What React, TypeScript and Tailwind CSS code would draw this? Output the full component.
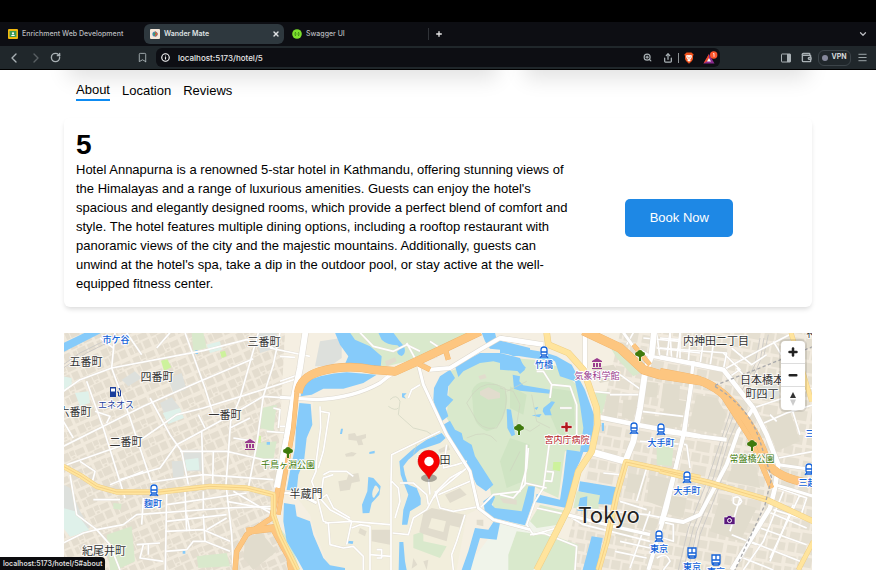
import React from "react";
import {
  Bookmark,
  ChevronDown,
  ChevronLeft,
  ChevronRight,
  Info,
  Menu,
  Plus,
  RotateCw,
  Share,
  Wallet,
  X,
  ZoomIn,
} from "lucide-react";

/* ------------------------------------------------------------------ */
/* Map data: each shape is drawn in the local space of one map tile.   */
/* ------------------------------------------------------------------ */

type Tile = "A" | "B" | "C" | "D";
type Shape = [Tile, string, number?];

const tileX: Record<Tile, number> = { A: 60, B: 280, C: 500, D: 660 };

const palace: Shape[] = [
  ["B", "M100 215L195 215L330 150L410 110L430 160L480 290L580 450L600 540L560 560L530 726L150 726L100 600L90 560L45 500L60 400L95 290Z"],
];

const parks: Shape[] = [
  ["B", "M200 14L600 14L400 95L300 120Z"],
  ["B", "M510 130L640 85L760 95L830 115L900 180L925 300L900 370L855 370L835 510L760 475L740 560L640 540L630 480L500 270Z"],
  ["A", "M605 240L650 230L640 310L600 300Z"],
  ["A", "M590 345L650 340L640 395L580 390Z"],
  ["A", "M395 14L430 14L440 60L400 70Z"],
  ["A", "M140 620L215 595L225 700L170 726L150 726Z"],
  ["A", "M410 685L500 675L510 715L415 720Z"],
  ["A", "M160 525L185 527L182 545L160 542Z"],
  ["B", "M400 620L430 610L430 640L500 655L480 690L400 660Z"],
  ["B", "M0 600L30 640L60 726L40 726L0 650Z"],
  ["C", "M50 610L160 625L100 726L25 726L25 680Z"],
  ["C", "M165 625L235 650L225 726L120 726Z"],
  ["C", "M120 530L200 550L175 590L110 600L90 580Z"],
  ["C", "M285 190L325 190L305 260L290 240Z"],
  ["C", "M470 350L520 360L515 415L470 410Z"],
  ["C", "M320 40L430 130L400 145L350 90Z"],
  ["C", "M230 490L300 500L295 545L220 540Z"],
];

const parksDeep: Shape[] = [
  ["B", "M575 190Q590 150 640 165Q690 180 680 230Q670 300 620 310Q580 290 580 250Z"],
  ["B", "M690 175L740 200L730 260L690 240Z"],
  ["C", "M30 330L90 350L70 460L20 480L0 400Z"],
  ["C", "M150 180L220 190L225 290L180 330L150 260Z"],
];

const limes: Shape[] = [
  ["A", "M303 98L322 94L334 118L312 128Z"],
  ["A", "M480 72L495 68L500 84L485 90Z"],
  ["A", "M592 325L603 323L602 345L590 344Z"],
  ["C", "M160 402L183 402L180 430L158 425Z"],
];

const mints: Shape[] = [
  ["A", "M10 145L35 150L35 175L10 190Z"],
  ["A", "M45 195L85 190L90 225L60 235Z"],
  ["A", "M440 50L480 40L485 65L450 75Z"],
  ["A", "M308 255L360 240L372 270L325 288Z"],
  ["A", "M375 395L415 390L418 425L380 428Z"],
  ["A", "M10 540L45 550L90 610L30 626L10 600Z"],
];

const civic: Shape[] = [
  ["A", "M185 155L225 130L245 150L205 175Z"],
  ["A", "M300 225L335 208L360 240L312 255Z"],
  ["A", "M325 150L365 135L380 185L340 195Z"],
  ["A", "M335 400L370 398L372 450L340 452Z"],
  ["A", "M370 365L430 365L428 430L378 430L372 395Z"],
  ["A", "M10 470L30 480L60 550L90 600L50 610L10 560Z"],
  ["A", "M590 14L650 14L650 60L600 75Z"],
  ["B", "M120 40L185 30L185 90L150 115L105 115Z"],
  ["D", "M280 180L350 170L360 205L300 210Z"],
];

const waters: Shape[] = [
  ["A", "M10 45L75 14L125 14L10 72Z"],
  ["A", "M406 66L414 66L414 78L406 78ZM620 342L630 342L630 350L620 350ZM368 665L376 665L376 677L368 677Z"],
  ["B", "M58 225L92 228L97 290L80 330L72 400L55 440L50 488L20 486L30 430L45 360L48 300Z"],
  ["B", "M12 525L45 530L50 565L90 580L100 620L130 690L150 712L195 720L195 726L70 726L50 690L20 640L10 580Z"],
  ["B", "M165 14L210 14L225 35L270 55L305 85L302 118L250 112L195 108L205 85L180 50Z"],
  ["B", "M70 165Q120 138 200 133L290 140L250 165L190 182L130 182L95 200L62 205Z"],
  ["B", "M295 14L340 14Q355 35 372 55Q380 75 365 84Q350 78 352 70Q365 62 352 52Q320 50 305 35Z"],
  ["B", "M265 447L280 450L302 475L298 500L275 525L268 555L248 556L246 530L262 490ZM278 488Q274 508 282 510L298 486Q290 468 284 474Z"],
  ["B", "M485 315L497 330L480 345L420 365L385 395L370 415L375 440L385 470L410 480L422 510L422 530L390 550L382 590L366 590L370 545L385 500L370 462L362 440L358 400L400 362L440 335Z"],
  ["B", "M358 642L370 642L375 700L380 726L356 726Z"],
  ["B", "M510 125L525 150L505 175L502 202L520 215L497 240L505 265L485 280L470 255L460 215L462 180L480 145Z"],
  ["B", "M490 290L510 278L525 305L545 315L550 335L575 350L585 385L640 470L618 490L590 470L570 430L535 370Z"],
  ["B", "M525 115L600 75L660 75L720 90L735 125L720 138L700 115L640 100L600 105L550 130L535 147Z"],
  ["B", "M605 14L645 14L650 35L750 60L750 80L700 85L660 65L630 62L615 40Z"],
  ["B", "M183 302L189 302L186 318L180 318ZM268 372L284 368L284 376L268 378ZM366 196L380 196L372 204L378 212L366 208ZM203 638L220 640L218 648L203 646Z"],
  ["B", "M610 520L640 498L645 508L635 530L645 540L725 550L745 475L765 475L760 520L735 592L640 570L615 555Z"],
  ["B", "M585 600L625 605L640 582L660 585L650 635L600 630L585 680L572 726L545 726L565 670Z"],
  ["C", "M38 140L60 145L58 160L70 172L150 185L150 197L60 188L42 182Z"],
  ["C", "M20 243L33 245L45 320L35 325L22 300Z"],
  ["C", "M0 50L130 72L170 85L215 110L255 185L282 260L280 330L275 372L240 372L250 300L240 230L225 160L180 145L165 100L80 88L0 75Z"],
  ["C", "M0 90L60 98L78 120L60 130L0 125Z"],
  ["C", "M200 365L250 372L240 400L225 430L215 490L200 540L105 522L110 498L180 515L190 450Z"],
  ["C", "M240 460L350 478L335 530L295 528L300 502L235 490Z"],
  ["C", "M275 625L308 630L290 726L248 726Z"],
  ["C", "M130 240L155 220L165 222L150 245L155 262L135 262L128 250ZM102 240L115 236L110 246ZM95 262L125 258L118 268ZM240 510L262 505L260 550L232 548ZM305 285L312 285L312 308L306 310Z"],
  ["D", "M283 193L289 195L290 208L283 208Z"],
];

const buildings: Shape[] = [
  ["B", "M205 318L225 315L230 325L258 318L258 330L245 335L250 350L235 352L230 338L205 335Z"],
  ["B", "M175 460L200 455L205 440L235 435L240 460L215 465L210 485L180 490Z"],
  ["B", "M195 378L215 372L230 376L220 385L198 386Z"],
  ["B", "M430 555L455 540L555 560L545 600L510 592L500 640L430 618L418 612ZM455 570L445 600L490 612L498 580Z"],
  ["B", "M495 500L540 480L560 500L510 525Z"],
  ["B", "M240 600L260 610L255 625L235 615ZM275 605L330 605L330 650L275 640Z"],
  ["B", "M600 190L625 178L660 195L660 210L625 215L600 200Z"],
  ["B", "M595 145L615 138L620 150L600 155Z"],
  ["B", "M315 100L345 88L350 100L320 115Z"],
  ["B", "M475 365L505 350L510 365L480 375ZM660 510L710 515L710 530L670 525Z"],
  ["B", "M400 690L412 710L395 722ZM430 700L445 695L440 726ZM590 575L610 575L610 595L590 590Z"],
  ["A", "M555 640L600 610L650 670L580 726L550 690Z"],
  ["C", "M320 200L360 195L350 280L310 270Z"],
  ["C", "M370 215L415 215L400 275L365 270Z"],
  ["C", "M430 160L475 165L470 210L430 205Z"],
  ["C", "M490 165L540 172L535 250L480 240Z"],
  ["C", "M430 260L520 270L520 300L430 290Z"],
  ["C", "M385 435L440 445L425 500L375 490Z"],
  ["C", "M450 440L525 455L510 545L440 520Z"],
  ["C", "M355 580L405 590L395 635L345 625Z"],
  ["C", "M420 560L475 575L465 610L410 600Z"],
  ["C", "M275 120L340 110L370 150L300 165Z"],
  ["D", "M20 210L80 220L60 300L0 290Z"],
  ["D", "M110 200L170 210L200 260L180 320L85 300Z"],
  ["D", "M310 270L390 250L420 340L350 370Z"],
  ["D", "M230 380L290 420L300 480L200 460Z"],
  ["D", "M20 500L80 510L70 570L10 555Z"],
  ["D", "M180 510L290 540L240 640L150 610Z"],
];

const smallRoads: Shape[] = [
  ["A", "M10 190L60 155L155 120L430 68L560 35L640 60"],
  ["A", "M10 355L160 280L250 235L420 160L580 92"],
  ["A", "M20 410L250 330L350 260L430 240L560 200L750 140"],
  ["A", "M80 160L130 300L195 510"],
  ["A", "M165 14L155 120L210 270L275 465"],
  ["A", "M200 14L245 80M330 14L290 60M120 30L160 60"],
  ["A", "M270 210L330 320L365 370L385 470"],
  ["A", "M375 14L435 180L460 260M415 260L435 300"],
  ["A", "M595 14L540 210L512 280L498 470L515 620L520 726"],
  ["A", "M180 455L300 420L350 350L470 285L550 240L610 205L750 215"],
  ["A", "M610 205L590 350L565 480"],
  ["A", "M360 370L500 370L610 395L660 395"],
  ["A", "M425 310L430 470M460 370L458 470"],
  ["A", "M275 462L430 440L640 455"],
  ["A", "M30 440L50 560L110 605L190 590L230 560L500 540L640 535"],
  ["A", "M110 605L150 650L180 726M10 645L70 615L110 605"],
  ["A", "M250 510L245 590M320 495L316 726M375 490L380 610M430 490L430 545M320 530L560 495M500 520L640 545"],
  ["A", "M320 580L500 560M316 610L430 605L510 640M380 560L390 610M430 560L435 640L510 670M440 605L500 570M316 670L380 665L400 640L435 640"],
  ["A", "M230 650L300 645M250 650L240 690L310 700M265 650L265 680"],
  ["A", "M520 330L585 340M510 300L570 270M520 490L640 560M540 640L630 580"],
  ["A", "M620 310L680 315L670 370M640 240L660 245L655 300M630 60L750 85M660 14L640 110L610 205"],
  ["A", "M105 250L150 265L140 285M10 280L40 330M60 400L105 430L95 470M150 470L250 430M100 515L180 515"],
  ["B", "M120 235L122 300L110 390L108 430L95 460L110 500L130 580L145 585L150 650L190 660L220 655L250 685L250 726"],
  ["B", "M122 250L148 255L130 370L115 420"],
  ["B", "M110 500L150 545L215 580L330 590M135 585L215 580L200 650M215 600L240 590L270 595L270 726"],
  ["B", "M130 440L150 430L200 430L220 445M125 490L130 450L160 440M120 515L140 500L160 540L210 570"],
  ["B", "M480 310L335 380L333 460L333 726M335 460L355 480L360 520L345 570"],
  ["B", "M338 615L385 620L400 570L440 545L470 490L510 450L545 430"],
  ["B", "M360 465L400 465L440 500L445 530M445 450L450 500M465 490L480 540L520 550L600 535"],
  ["B", "M500 350L490 420L530 410L560 400M475 500L570 460M460 510L475 490L560 420"],
  ["B", "M555 560L530 640L515 680L520 726M290 665L305 665L305 690L290 690M270 680L333 685"],
  ["B", "M385 210L395 185L420 170M240 14L280 55L340 70L380 50L420 70"],
  ["B", "M380 45L410 100M440 95L470 85L480 60L450 40"],
  ["B", "M0 85L45 88M0 160L55 140M0 295L25 295"],
  ["B", "M600 540L640 500L720 490L740 420L745 360"],
  ["C", "M110 130L130 130L155 170L150 210M155 170L210 175L230 230L230 330M180 240L215 240"],
  ["C", "M150 330L130 480L105 520M75 465L140 480M80 350L75 470L40 510L0 500M140 430L160 432L155 460L135 458"],
  ["C", "M105 520L80 590L100 620L170 600M200 560L250 590L450 640M110 540L200 560M230 540L440 560L540 580"],
  ["C", "M90 620L130 615L230 655L225 726"],
  ["C", "M360 140L430 190M330 200L420 200M280 190L330 195M310 435L360 440M360 520L440 545M410 520L440 420M425 250L550 265M420 340L560 350M360 640L450 660M345 670L440 690M390 720L450 550"],
  ["C", "M400 14L380 50M430 30L540 40M470 14L480 90M510 14L515 95M540 14L540 100M470 60L600 75"],
  ["C", "M480 580L520 590L520 640L490 630M560 350L570 420M470 690Q500 670 510 700L490 726"],
  ["D", "M0 60L200 75L190 125M30 14L20 90M60 14L50 95M90 40L85 100M130 40L120 110M160 50L150 115M0 30L60 35"],
  ["D", "M190 75L240 125L210 145M215 60L275 110L320 80M190 125L330 50L400 14M230 120L260 150M340 40L370 90"],
  ["D", "M280 240L370 210L460 180M370 160L420 320M300 290L380 255L460 230M355 390L460 370M330 260L350 280"],
  ["D", "M355 480L440 510L420 570L340 545M370 490L310 640L250 726M420 500L330 690M300 600L440 650M320 550L440 600M270 640L420 700M250 690L340 726M290 610L240 700"],
  ["D", "M400 530L330 700M215 620L290 650M240 510L210 610M220 510Q240 500 245 520Q235 540 220 525Z"],
];

const bigRoads: Shape[] = [
  ["B", "M76 14L60 120L40 215L20 330L-10 480", 18],
  ["B", "M0 208L110 215Q220 210 300 165Q350 120 420 105", 10],
  ["B", "M415 110L430 170L500 320L570 430L595 540L640 575L750 605", 9],
  ["B", "M410 100L450 125L510 120L600 65L660 30L750 45", 12],
  ["B", "M-20 495L20 495L60 500L110 525", 8],
  ["C", "M0 30L130 50", 14],
  ["C", "M462 14L455 80L435 135L420 240L400 340L375 402", 18],
  ["C", "M300 268L410 290L600 325", 14],
  ["C", "M275 372L375 400", 20],
  ["C", "M255 14L255 120", 12],
  ["C", "M370 14L400 55L450 85L600 108", 9],
  ["C", "M575 165L550 320L500 540L445 726", 12],
  ["C", "M200 560L360 600L450 620", 10],
  ["D", "M0 88L190 125L280 240L320 320L355 410L345 480L330 540L215 726", 14],
  ["D", "M100 100L75 310L0 590", 10],
  ["D", "M280 240L235 310L200 410L120 560L70 582L0 570", 12],
  ["D", "M0 310L200 335", 12],
  ["D", "M355 410L460 425M345 470L460 505", 9],
];

const motorways: Shape[] = [
  ["B", "M55 195Q60 148 120 130Q200 108 280 125L345 130L400 105L520 48L600 10", 24],
  ["B", "M50 195L40 300L10 470L-5 560", 12],
  ["B", "M400 100L450 125M505 95L495 60", 14],
  ["A", "M525 726L530 670L560 620L635 570L655 480", 14],
  ["A", "M560 610L640 600L690 690L695 726", 20],
  ["C", "M250 8L360 60L430 125L480 140L600 158", 26],
  ["C", "M400 50L450 110", 12],
  ["D", "M0 133L90 150Q170 165 230 240Q290 310 320 400Q345 450 460 468", 24],
  ["D", "M180 190L270 330L335 480", 14],
];

const trunks: Shape[] = [
  ["A", "M10 415L60 442L110 475L170 492L300 492L450 475L560 480L640 500L640 560L660 620L712 726", 13],
  ["C", "M140 14L145 50L205 75L250 125L290 240L292 290L275 370L235 430L205 540L170 610L110 726", 17],
  ["C", "M600 450L378 402L350 500L320 640L295 726", 15],
  ["D", "M0 428L150 465L320 515L460 580", 15],
  ["D", "M393 14L410 70L455 220M460 640L415 726", 12],
];

const trunkCentres: Shape[] = [
  ["A", "M10 415L60 442L110 475L170 492L300 492L450 475L560 480L640 500L640 560L660 620L712 726"],
  ["C", "M600 450L378 402L350 500L320 640L295 726"],
  ["D", "M0 428L150 465L320 515"],
];

const rails: Shape[] = [
  ["D", "M225 250L195 330L160 450L100 600L70 726M240 260L205 340L170 460L110 610L85 726M215 240L185 330L145 450L85 600L55 726M250 265L215 350L180 470L120 620L100 726"],
  ["D", "M300 30L285 110L240 200M312 30L300 100L260 190M325 20L310 90"],
  ["A", "M10 110L60 75L160 25M10 120L80 75L170 30"],
];

const dashed: Shape[] = [
  ["D", "M165 172L300 120L460 55M165 175Q270 240 300 340L335 450L315 530L225 726"],
];

const footpaths: Shape[] = [
  ["B", "M330 215Q350 195 360 220L355 260L400 300L440 310L470 330M325 235Q345 250 355 240M400 380L410 350"],
  ["B", "M580 195Q620 150 675 180Q690 240 650 300Q600 310 580 260L560 225ZM560 330Q620 300 650 340M680 190L740 160"],
  ["C", "M0 180L40 190L60 230L50 290L90 310L120 290M60 370L30 430M95 200L110 280L150 300"],
];

function Layer({
  items,
  paint,
  className,
  extra = 0,
  base = 1,
  dash,
}: {
  items: Shape[];
  paint: "fill" | "line";
  className: string;
  extra?: number;
  base?: number;
  dash?: string;
}) {
  return (
    <g className={className} strokeLinejoin="round" strokeDasharray={dash}>
      {items.map(([tile, d, w], i) => (
        <path
          key={i}
          d={d}
          fillRule="evenodd"
          transform={`translate(${tileX[tile]} 328) scale(0.33333)`}
          fill={paint === "line" ? "none" : undefined}
          strokeWidth={paint === "line" ? (w ?? base) + extra : undefined}
        />
      ))}
    </g>
  );
}

/* ------------------------------ Labels ----------------------------- */

type Label = [string, number, number];

const districts: Label[] = [
  ["五番町", 86, 366],
  ["四番町", 157, 381],
  ["三番町", 264, 346],
  ["六番町", 75, 416],
  ["一番町", 225, 419],
  ["二番町", 126, 446],
  ["半蔵門", 306, 498],
  ["紀尾井町", 104, 555],
  ["千代田", 434, 464],
  ["内神田二丁目", 716, 345],
  ["日本橋本", 762, 384],
  ["町四丁", 762, 398],
  ["神", 812, 337],
];

const stations: Label[] = [
  ["市ケ谷", 116, 343],
  ["麴町", 153, 507],
  ["竹橋", 544, 368],
  ["大手町", 661, 446],
  ["大手町", 687, 494],
  ["東京", 659, 552],
  ["東京", 692, 570],
  ["東京", 716, 575],
  ["三越前", 812, 486],
  ["三", 810, 437],
];

function Train({ x, y }: { x: number; y: number }) {
  return (
    <g transform={`translate(${x} ${y})`}>
      <path d="M-4 6V-2Q-4-6 0-6T4-2V6Z" className="fill-white" />
      <path d="M-3 2V-2Q-3-5 0-5T3-2V2Q3 3 2 3H-2Q-3 3-3 2ZM-3 0H3M-2 3L-4 6M2 3L4 6M-3 5H3" fill="none" strokeWidth="1.3" className="stroke-[#1462d8]" />
    </g>
  );
}

function Metro({ x, y }: { x: number; y: number }) {
  return (
    <g transform={`translate(${x} ${y})`}>
      <path d="M-4-5H4V3H-4ZM-4 0H4M0-5V0M-2 3L-4 5M2 3L4 5M-3 5H3" strokeWidth="1.3" className="fill-white stroke-[#1462d8]" />
    </g>
  );
}

function Tree({ x, y }: { x: number; y: number }) {
  return (
    <g transform={`translate(${x} ${y})`} className="fill-[#3f7a0c] stroke-white" strokeWidth="0.8" paintOrder="stroke">
      <path d="M-1 6V2L-3 1Q-5 1-5-1Q-5-3-3-3Q-2-5 0-5T3-3Q5-3 5-1Q5 1 3 1L1 2V6Z" />
    </g>
  );
}

function Museum({ x, y }: { x: number; y: number }) {
  return (
    <g transform={`translate(${x} ${y})`} className="fill-[#9a3c8e]">
      <path d="M0-6L5-3V-2H-5V-3ZM-4-1H-2V3H-4ZM-1-1H1V3H-1ZM2-1H4V3H2ZM-5 4H5V5H-5Z" />
    </g>
  );
}

function CityMap() {
  return (
    <svg
      viewBox="64 333 748 237"
      preserveAspectRatio="xMidYMin slice"
      className="block h-full w-full"
      role="img"
      aria-label="Map of central Tokyo"
    >
      <defs>
        <pattern id="blocks" width="26" height="20" patternUnits="userSpaceOnUse" patternTransform="rotate(-24)">
          <rect width="26" height="20" fill="#f1eadd" />
          <path d="M1 1h7v8h-7zM9 1h5v5h-5zM15 2h9v6h-9zM1 11h4v7h-4zM6 10h9v8h-9zM17 10h7v8h-7zM10 7h3v2h-3z" fill="#e4ddcf" />
        </pattern>
        <pattern id="blocksEast" width="30" height="24" patternUnits="userSpaceOnUse" patternTransform="rotate(10)">
          <rect width="30" height="24" fill="#f2ebdf" />
          <path d="M1 2h10v8h-10zM13 1h14v10h-14zM1 13h7v9h-7zM10 13h9v9h-9zM21 14h7v8h-7z" fill="#e5dfd1" />
        </pattern>
      </defs>
      <rect x="64" y="333" width="748" height="237" fill="url(#blocksEast)" />
      <path d="M64 333H306L285 450L278 520L305 570H64Z" fill="url(#blocks)" />
      <path d="M285 333H620L600 420L560 570H300L275 520Z" fill="#f5efe2" />
      <path d="M500 523L570 515L535 570H465Z" fill="#f0f4ea" />

      <Layer items={palace} paint="fill" className="fill-[#f2eedc]" />
      <Layer items={parks} paint="fill" className="fill-[#d9e9cc]" />
      <Layer items={parksDeep} paint="fill" className="fill-[#cfe4c3]" />
      <Layer items={civic} paint="fill" className="fill-[#dde0dc]" />
      <Layer items={mints} paint="fill" className="fill-[#dff1ea]" />
      <Layer items={limes} paint="fill" className="fill-[#cdf29c]" />
      <Layer items={waters} paint="fill" className="fill-[#86cbfa]" />
      <Layer items={buildings} paint="fill" className="fill-[#e1dccd]" />
      <Layer items={footpaths} paint="line" className="stroke-[#cfd3c0]" base={2} />
      <Layer items={rails} paint="line" className="stroke-[#cfccc8]" base={3} />
      <Layer items={smallRoads} paint="line" className="stroke-[#e2dcd2]" base={7} />
      <Layer items={smallRoads} paint="line" className="stroke-white" base={5} />
      <Layer items={bigRoads} paint="line" className="stroke-[#ddd8ce]" extra={3} />
      <Layer items={bigRoads} paint="line" className="stroke-white" />
      <Layer items={motorways} paint="line" className="stroke-[#efb26a]" extra={2} />
      <Layer items={motorways} paint="line" className="stroke-[#fdc680]" />
      <Layer items={trunks} paint="line" className="stroke-[#efcf86]" extra={3} />
      <Layer items={trunks} paint="line" className="stroke-[#ffe49d]" />
      <Layer items={trunkCentres} paint="line" className="stroke-[#f0c674]" base={2} />
      <Layer items={dashed} paint="line" className="stroke-[#a9a9ab]" base={4} dash="10 7" />

      <g className="font-['Noto_Sans_CJK_JP',sans-serif]" textAnchor="middle" strokeLinejoin="round" paintOrder="stroke">
        <g className="fill-[#333333] stroke-white/80 text-[11px]" strokeWidth="2">
          {districts.map(([t, x, y], i) => (
            <text key={i} x={x} y={y}>{t}</text>
          ))}
        </g>
        <g className="fill-[#1462d8] stroke-white text-[9px] font-medium" strokeWidth="2">
          {stations.map(([t, x, y], i) => (
            <text key={i} x={x} y={y}>{t}</text>
          ))}
        </g>
        <g className="stroke-white text-[9px]" strokeWidth="2">
          <text x="116" y="408" className="fill-[#1b3f9c]">エネオス</text>
          <text x="288" y="468" className="fill-[#3f7a0c]">千鳥ヶ淵公園</text>
          <text x="752" y="462" className="fill-[#3f7a0c]">常盤橋公園</text>
          <text x="597" y="379" className="fill-[#9a3c8e]">気象科学館</text>
          <text x="567" y="443" className="fill-[#b3181e]">宮内庁病院</text>
        </g>
      </g>

      <text x="609" y="523" textAnchor="middle" paintOrder="stroke" strokeWidth="2" className="fill-[#222222] stroke-white/70 font-['Noto_Sans_CJK_JP',sans-serif] text-[22px]">
        Tokyo
      </text>

      <Train x={154} y={490} />
      <Train x={544} y={352} />
      <Train x={634} y={428} />
      <Train x={661} y={429} />
      <Train x={687} y={477} />
      <Train x={659} y={536} />
      <Train x={809} y={469} />
      <Metro x={692} y={553} />
      <Metro x={716} y={560} />
      <Tree x={288} y={452} />
      <Tree x={519} y={429} />
      <Tree x={640} y={355} />
      <Tree x={752} y={445} />
      <Museum x={250} y={445} />
      <Museum x={597} y={364} />

      <g className="fill-[#1b3f9c]">
        <path d="M110 387h6v10h-6z" />
        <path d="M111 388.500h4v3h-4z" className="fill-white" />
        <path d="M117 392h1.500v4h2v-5l-1.500-3" fill="none" className="stroke-[#1b3f9c]" />
      </g>
      <path d="M565 422h3v3.500h4v3h-4v3.500h-3v-3.500h-4v-3h4z" className="fill-[#b3181e] stroke-white" strokeWidth="0.6" />
      <g>
        <path d="M724 517h3l1-1.500h3l1 1.500h3v7.500h-11z" className="fill-[#5b1a7d] stroke-white" strokeWidth="0.6" />
        <circle cx="729.500" cy="520.500" r="2" fill="none" className="stroke-white" />
      </g>

      <ellipse cx="429" cy="478" rx="8" ry="4" className="fill-black/30" />
      <path
        d="M429 479C426 472 418 469 418 461A10.500 10.500 0 0 1 439.500 461C439.500 469 432 472 429 479Z"
        className="fill-[#f70000] stroke-[#c80000]"
        strokeWidth="0.5"
      />
      <circle cx="429" cy="461.500" r="4.700" className="fill-white" />
    </svg>
  );
}

/* --------------------------- Browser chrome ------------------------ */

function TabStrip() {
  return (
    <div className="flex h-6 items-center bg-[#0d0e13] font-['Inter',sans-serif] text-[7px] font-medium text-[#b9bbbf]">
      <button className="ml-1 flex h-5 w-[140px] items-center gap-1 pl-1">
        <svg viewBox="0 0 10 10" className="h-[10px] w-[10px]" aria-hidden="true">
          <rect width="10" height="10" rx="1" fill="#f2b90f" />
          <rect x="1.600" y="2" width="6.800" height="6" fill="#3d9a55" />
          <circle cx="5" cy="4.300" r="1.100" fill="#fff" />
          <path d="M2.800 7Q5 4.700 7.200 7Z" fill="#fff" />
        </svg>
        Enrichment Web Development
      </button>
      <div className="flex h-5 w-[140px] items-center rounded-md bg-[#2e383e] pr-1 pl-[6px] font-semibold text-[#dfe2e4]">
        <button className="flex flex-1 items-center gap-1">
          <svg viewBox="0 0 10 10" className="h-[10px] w-[10px]" aria-hidden="true">
            <rect width="10" height="10" rx="1" fill="#f6e8da" />
            <circle cx="5" cy="5" r="2.600" fill="#4b86b4" />
            <path d="M5 2L8 5L5 8Z" fill="#d8613c" />
            <path d="M3 4L6 4L4.500 7Z" fill="#3f9a6b" />
          </svg>
          Wander Mate
        </button>
        <button aria-label="Close tab">
          <X className="h-2 w-2" strokeWidth={4} />
        </button>
      </div>
      <button className="flex h-5 flex-none basis-[144px] items-center gap-1 pl-2">
        <svg viewBox="0 0 10 10" className="h-[10px] w-[10px]" aria-hidden="true">
          <circle cx="5" cy="5" r="4.800" fill="#7be02c" />
          <path d="M3.500 3Q2.500 5 3.500 7M6.500 3Q7.500 5 6.500 7M5 4.500V5.500" fill="none" stroke="#2c6a12" strokeWidth="0.8" />
        </svg>
        Swagger UI
      </button>
      <span className="h-3 w-px bg-[#303338]" />
      <button aria-label="New tab" className="ml-1 p-[2px] text-[#e6e6e6]">
        <Plus className="h-2 w-2" strokeWidth={4} />
      </button>
      <button aria-label="Search tabs" className="mr-2 ml-auto">
        <ChevronDown className="h-[10px] w-[10px]" strokeWidth={3} />
      </button>
    </div>
  );
}

function Toolbar() {
  return (
    <div className="flex h-6 items-center border-b border-black bg-[#20272b] font-['Inter',sans-serif] text-[#a9b1b5]">
      <div className="flex flex-none basis-[156px] items-center gap-[6px] pl-[6px]">
        <button aria-label="Back"><ChevronLeft className="h-4 w-4" strokeWidth={2} /></button>
        <button aria-label="Forward" className="text-[#596064]"><ChevronRight className="h-4 w-4" strokeWidth={2} /></button>
        <button aria-label="Reload"><RotateCw className="h-[11px] w-[11px]" strokeWidth={3} /></button>
        <button aria-label="Bookmark" className="mr-2 ml-auto"><Bookmark className="h-[11px] w-[11px]" strokeWidth={2} /></button>
      </div>
      <div className="flex h-[19px] flex-1 items-center rounded-md bg-[#0d0e13] pr-[2px] pl-[5px]">
        <Info className="h-[9px] w-[9px] text-white" strokeWidth={3} />
        <input
          aria-label="Address"
          defaultValue="localhost:5173/hotel/5"
          className="ml-2 min-w-0 flex-1 bg-transparent text-[8px] font-medium text-[#e8e8e8] outline-none"
        />
        <div className="flex items-center gap-[5px]">
          <button aria-label="Zoom" className="mr-[6px]"><ZoomIn className="h-[9px] w-[9px]" strokeWidth={3} /></button>
          <button aria-label="Share"><Share className="h-[10px] w-[10px]" strokeWidth={3} /></button>
          <span className="h-[10px] w-px bg-[#8c9194]" />
          <button aria-label="Shields">
            <svg viewBox="0 0 10 12" className="h-3 w-[10px]" aria-hidden="true">
              <path d="M2.500 0.500H7.500L8.500 1.500L9.700 2.500L9 4L9 7Q8.500 9.500 5 11.700Q1.500 9.500 1 7L1 4L0.300 2.500L1.500 1.500Z" fill="#f2521d" />
              <path d="M2 3.500L4 3L5 3.300L6 3L8 3.500L7.500 6L6 7.500L7 8L5 9.700L3 8L4 7.500L2.500 6Z" fill="#fff" />
              <path d="M3 4.800L4.500 5.400M7 4.800L5.500 5.400M5 5.500V7.500" stroke="#f2521d" strokeWidth="0.6" />
            </svg>
          </button>
          <button aria-label="Rewards" className="ml-1">
            <svg viewBox="0 0 15 14" className="h-[14px] w-[15px]" aria-hidden="true">
              <path d="M6 3L0.500 12.500H11.500Z" fill="#8a2a8f" />
              <path d="M6 3L0.500 12.500L6 9Z" fill="#f04a24" />
              <path d="M6 7L4 10.500H8Z" fill="#fff" />
              <circle cx="10.700" cy="4" r="3.700" fill="#fb542b" />
              <path d="M10 3L11 2.300V5.800" fill="none" stroke="#fff" strokeWidth="0.800" />
            </svg>
          </button>
        </div>
      </div>
      <div className="flex flex-none basis-[156px] items-center justify-end gap-[10px] pr-2">
        <button aria-label="Sidebar">
          <svg viewBox="0 0 10 10" className="h-[10px] w-[10px]" aria-hidden="true">
            <rect x="0.500" y="1" width="9" height="8" rx="0.500" fill="none" stroke="currentColor" />
            <rect x="6" y="1" width="3.500" height="8" fill="currentColor" />
          </svg>
        </button>
        <button aria-label="Wallet"><Wallet className="h-[11px] w-[11px]" strokeWidth={3} /></button>
        <button className="-mx-1 flex h-4 w-[33px] items-center justify-center gap-[3px] rounded-md border border-[#3c4449] text-[7px] font-bold text-[#d6d9db]">
          <span className="h-[6px] w-[6px] rounded-full bg-[#85889b]" />
          VPN
        </button>
        <button aria-label="Menu"><Menu className="h-[11px] w-[11px]" strokeWidth={2} /></button>
      </div>
    </div>
  );
}

/* ------------------------------- Page ------------------------------ */

function MapControls() {
  const item = "flex h-[23px] w-6 items-center justify-center";
  return (
    <div className="absolute top-2 right-[7px] divide-y divide-[#dddddd] rounded bg-white text-[#222222] shadow-[0_0_0_2px_rgba(0,0,0,0.1)]">
      <button aria-label="Zoom in" className={item}><Plus className="h-3 w-3" strokeWidth={5} /></button>
      <button aria-label="Zoom out" className={item}>
        <svg viewBox="0 0 12 12" className="h-3 w-3" aria-hidden="true"><rect x="1.500" y="5" width="9" height="2.400" rx="1" fill="#222" /></svg>
      </button>
      <button aria-label="Reset north" className={item}>
        <svg viewBox="0 0 12 16" className="h-4 w-3" aria-hidden="true">
          <path d="M6 1L9 7H3Z" fill="#333" />
          <path d="M6 15L9 8.500H3Z" fill="#ccc" />
        </svg>
      </button>
    </div>
  );
}

export default function App() {
  return (
    <div className="relative flex h-screen flex-col overflow-hidden bg-white font-['Liberation_Sans',Arial,sans-serif] text-black">
      <header className="border-t-[22px] border-black">
        <TabStrip />
        <Toolbar />
      </header>

      <main className="flex min-h-0 flex-1 flex-col overflow-hidden px-16">
        <div className="-mt-20 grid h-20 flex-none grid-cols-[3fr_2fr] gap-5">
          <div className="bg-white shadow-[0_12px_20px_-4px_rgba(0,0,0,0.12)]" />
          <div className="bg-white shadow-[0_12px_20px_-4px_rgba(0,0,0,0.12)]" />
        </div>

        <nav className="relative mt-[10px] flex items-center gap-3 px-3 text-[13px] leading-[19px]">
          <a href="#about" className="border-b-2 border-[#0d8bf2]">About</a>
          <a href="#location">Location</a>
          <a href="#reviews">Reviews</a>
        </nav>

        <section
          id="about"
          className="mt-[17px] grid grid-cols-3 rounded-md bg-white p-3 pb-[14px] shadow-[0_3px_5px_-1px_rgba(0,0,0,0.15)]"
        >
          <div className="col-span-2 -mr-4">
            <h1 className="text-[28px] leading-[30px] font-bold">5</h1>
            <p className="text-[13px] leading-[19px]">
              Hotel Annapurna is a renowned 5-star hotel in Kathmandu, offering stunning views of the Himalayas and a
              range of luxurious amenities. Guests can enjoy the hotel's spacious and elegantly designed rooms, which
              provide a perfect blend of comfort and style. The hotel features multiple dining options, including a
              rooftop restaurant with panoramic views of the city and the majestic mountains. Additionally, guests can
              unwind at the hotel's spa, take a dip in the outdoor pool, or stay active at the well-equipped fitness
              center.
            </p>
          </div>
          <div className="flex items-center justify-center pt-3">
            <button className="h-[38px] w-[108px] rounded-[5px] bg-[#1e88e5] text-[13px] text-white">Book Now</button>
          </div>
        </section>

        <section id="location" className="relative mt-[26px] min-h-0 flex-1">
          <CityMap />
          <MapControls />
        </section>
      </main>

      <div className="absolute bottom-0 left-0 rounded-tr bg-[#0c0c0f] px-[3px] font-['Inter',sans-serif] text-[7px] leading-[13px] font-semibold text-[#dcdcdc]">
        localhost:5173/hotel/5#about
      </div>
    </div>
  );
}
